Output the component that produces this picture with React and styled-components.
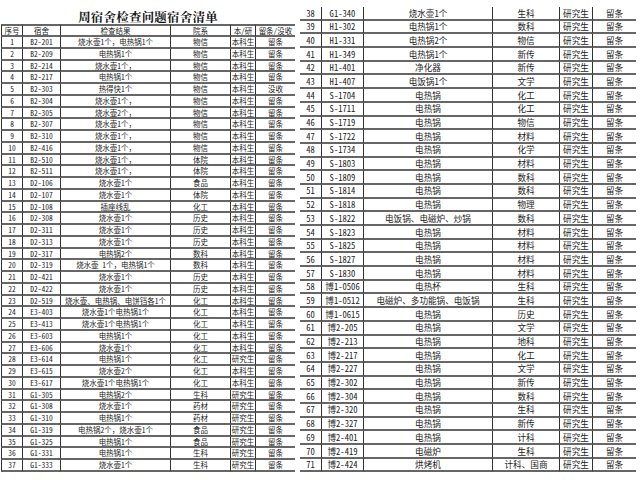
import React from "react";
import styled, { createGlobalStyle } from "styled-components";

const GlobalStyle = createGlobalStyle`
  html, body {
    margin: 0;
    padding: 0;
    background: #fff;
  }
  body {
    width: 640px;
    height: 480px;
    overflow: hidden;
  }
`;

// 序号|宿舍|检查结果|院系|本/研|留条/没收
const leftRows = `
1|B2-201|烧水壶1个，电热锅1个|物信|本科生|留条
2|B2-209|电热锅1个|物信|本科生|留条
3|B2-214|烧水壶1个，|物信|本科生|留条
4|B2-217|电热锅1个|物信|本科生|留条
5|B2-303|热得快1个|物信|本科生|没收
6|B2-304|烧水壶1个，|物信|本科生|留条
7|B2-305|烧水壶2个，|物信|本科生|留条
8|B2-307|烧水壶1个，|物信|本科生|留条
9|B2-310|烧水壶1个，|物信|本科生|留条
10|B2-416|烧水壶1个，|物信|本科生|留条
11|B2-510|烧水壶1个，|体院|本科生|留条
12|B2-511|烧水壶1个，|体院|本科生|留条
13|D2-106|烧水壶1个|食品|本科生|留条
14|D2-107|烧水壶1个|体院|本科生|留条
15|D2-108|插座线乱|化工|本科生|留条
16|D2-308|烧水壶1个|历史|本科生|留条
17|D2-311|烧水壶1个|历史|本科生|留条
18|D2-313|烧水壶1个|历史|本科生|留条
19|D2-317|电热锅2个|数科|本科生|留条
20|D2-319|烧水壶 1个，电热锅1个|数科|本科生|留条
21|D2-421|烧水壶1个|历史|本科生|留条
22|D2-422|烧水壶1个|历史|本科生|留条
23|D2-519|烧水壶、电热锅、电饼铛各1个|化工|本科生|留条
24|E3-403|烧水壶1个电热锅1个|化工|本科生|留条
25|E3-413|烧水壶1个电热锅1个|化工|本科生|留条
26|E3-603|电热锅1个|化工|本科生|留条
27|E3-606|烧水壶1个|化工|本科生|留条
28|E3-614|电热锅1个|化工|研究生|留条
29|E3-615|烧水壶2个|化工|本科生|留条
30|E3-617|烧水壶1个电热锅1个|化工|本科生|留条
31|G1-305|电热锅2个|生科|研究生|留条
32|G1-308|烧水壶1个|药材|研究生|留条
33|G1-310|电热锅1个|药材|研究生|留条
34|G1-319|电热锅2个，烧水壶1个|食品|研究生|留条
35|G1-325|电热锅1个|食品|研究生|留条
36|G1-331|电热锅1个|生科|研究生|留条
37|G1-333|烧水壶1个|生科|研究生|留条
`;

const rightRows = `
38|G1-340|烧水壶1个|生科
39|H1-302|电热锅1个|数科
40|H1-331|电热锅2个|物信
41|H1-349|电热锅1个|新传
42|H1-401|净化器|新传
43|H1-407|电饭锅1个|文学
44|S-1704|电热锅|化工
45|S-1711|电热锅|化工
46|S-1719|电热锅|物信
47|S-1722|电热锅|材料
48|S-1734|电热锅|化学
49|S-1803|电热锅|材料
50|S-1809|电热锅|数科
51|S-1814|电热锅|数科
52|S-1818|电热锅|物理
53|S-1822|电饭锅、电磁炉、炒锅|数科
54|S-1823|电热锅|材料
55|S-1825|电热锅|材料
56|S-1827|电热锅|材料
57|S-1830|电热锅|材料
58|博1-0506|电热杯|生科
59|博1-0512|电磁炉、多功能锅、电饭锅|生科
60|博1-0615|电热锅|历史
61|博2-205|电热锅|文学
62|博2-213|电热锅|地科
63|博2-217|电热锅|化工
64|博2-227|电热锅|文学
65|博2-302|电热锅|新传
66|博2-304|电热锅|数科
67|博2-320|电热锅|生科
68|博2-327|电热锅|新传
69|博2-401|电热锅|计科
70|博2-419|电磁炉|生科
71|博2-424|烘烤机|计科、国商
`;

const parse = (text, extra = []) =>
  text
    .trim()
    .split("\n")
    .map((line) => [...line.split("|"), ...extra]);

const headers = ["序号", "宿舍", "检查结果", "院系", "本/研", "留条/没收"];

const Page = styled.div`
  width: 640px;
  height: 480px;
  display: flex;
  align-items: flex-start;
  background: #fff;
`;

const LeftSheet = styled.div`
  width: 294px;
  margin-left: 1px;
  display: flex;
  flex-direction: column;
`;

const Title = styled.div`
  height: 24px;
  display: flex;
  justify-content: center;
  align-items: flex-end;
  font-family: "Noto Serif CJK SC", "Noto Sans CJK SC", serif;
  font-weight: 700;
  font-size: 12.5px;
  line-height: 1;
  letter-spacing: 0.2px;
  color: #141414;
  padding-bottom: 1px;
  box-sizing: border-box;
`;

const Table = styled.div`
  display: grid;
  grid-template-columns: ${(p) => p.$cols};
  grid-template-rows: ${(p) => p.$rows};
  font-family: "Noto Sans Mono CJK SC", "Liberation Mono", "Noto Sans CJK SC", monospace;
  font-size: ${(p) => p.$size};
  color: #1c1c1c;
  margin-top: ${(p) => p.$top || "0"};
  margin-left: ${(p) => p.$left || "0"};
`;

const Cell = styled.div`
  display: flex;
  align-items: center;
  justify-content: center;
  box-sizing: border-box;
  white-space: nowrap;
  overflow: hidden;
  line-height: 1;
  border-bottom: 2px solid #666;
  border-left: ${(p) => (p.$open ? "none" : "1px solid #333")};
  border-top: ${(p) => (p.$head ? "2px solid #666" : "none")};
`;

const TableRows = ({ rows, openFirst, head }) => (
  <>
    {head &&
      head.map((h, i) => (
        <Cell key={"h" + i} $head $open={openFirst && i === 0}>
          {h}
        </Cell>
      ))}
    {rows.map((row) =>
      row.map((v, i) => (
        <Cell key={row[0] + "-" + i} $open={openFirst && i === 0}>
          {v}
        </Cell>
      ))
    )}
  </>
);

export default function App() {
  const left = parse(leftRows);
  const right = parse(rightRows, ["研究生", "留条"]);
  return (
    <Page>
      <GlobalStyle />
      <LeftSheet>
        <Title>周宿舍检查问题宿舍清单</Title>
        <Table
          $cols="21px 38px 110px 60px 25px 40px"
          $rows="13px repeat(37, 11.76px)"
          $size="7.5px">
          <TableRows rows={left} head={headers} />
        </Table>
      </LeftSheet>
      <Table
        $cols="21px 42px 129px 67px 33px 44px"
        $rows="repeat(34, 13.7px)"
        $size="8.6px"
        $top="7px"
        $left="5px">
        <TableRows rows={right} openFirst />
      </Table>
    </Page>
  );
}
